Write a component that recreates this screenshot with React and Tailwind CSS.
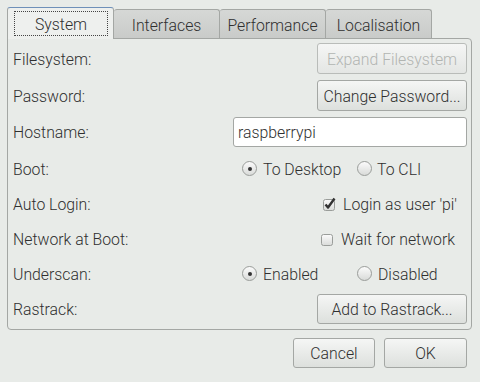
import React from 'react';

const btn =
  'flex items-center justify-center rounded-[3px] border bg-gradient-to-b from-[#f5f6f5] to-[#dde0dd] border-[#a4a7a4]';

function Radio({ checked }) {
  return (
    <span className="w-[15px] h-[15px] rounded-full border border-[#9a9d9a] bg-gradient-to-b from-[#fbfbfb] to-[#d9dbd9] flex items-center justify-center shrink-0">
      {checked && <span className="w-[4px] h-[4px] rounded-full bg-[#333]" />}
    </span>
  );
}

function Check({ checked }) {
  return (
    <svg width="14" height="14" viewBox="0 0 14 14" className="shrink-0">
      <defs>
        <linearGradient id="cb" x1="0" y1="0" x2="0" y2="1">
          <stop offset="0" stopColor="#fbfbfb" />
          <stop offset="1" stopColor="#d9dbd9" />
        </linearGradient>
      </defs>
      <rect x="1.5" y="2.5" width="11" height="11" rx="2" fill="url(#cb)" stroke="#9a9d9a" />
      {checked && (
        <path d="M3.5 7.5 L6 10.5 L12.5 1.5" fill="none" stroke="#333" strokeWidth="2.4" strokeLinejoin="round" />
      )}
    </svg>
  );
}

const Row = ({ label, children, h = 'h-[35px]', className = '' }) => (
  <div className={`flex items-center justify-between ${h} ${className}`}>
    <span className="pt-[2px]">{label}</span>
    {children}
  </div>
);

export default function App() {
  const tabs = ['Interfaces', 'Performance', 'Localisation'];
  return (
    <div className="w-[480px] h-[382px] bg-[#e8ebe8] font-['Roboto'] font-light text-[15.8px] leading-[18px] text-[#2f2f2f] pl-[7px] pr-[8px] pt-[7px] overflow-hidden">
      {/* tabs */}
      <div className="flex items-end h-[31px]">
        <div className="relative z-10 -mb-px w-[107px] h-[32px] bg-[#eef0ee] border border-b-0 border-[#a4a7a4] border-t-[#6f90b9] rounded-t-[3px] pl-[6px] pr-[5px] pt-[3px]">
          <div className="h-[25px] pt-[2px] border border-dotted border-[#444] flex items-center justify-center">System</div>
        </div>
        {tabs.map((t) => (
          <div
            key={t}
            className="w-[106px] h-[29px] pt-[3px] bg-gradient-to-b from-[#d6d8d6] to-[#c9cbc9] border border-b-0 border-l-0 border-[#a4a7a4] rounded-t-[3px] flex items-center justify-center"
          >
            {t}
          </div>
        ))}
      </div>

      {/* panel */}
      <div className="border border-[#a4a7a4] rounded-b-[4px] rounded-tr-[4px] pl-[5px] pr-[4px] pt-[4px] pb-[5px]">
        <Row label="Filesystem:" h="h-[31px]">
          <div className={`${btn} w-[150px] h-[31px] pt-[2px] text-[#b2b5b2] border-[#b9bcb9] from-[#f1f2f1] to-[#e4e6e4]`}>Expand Filesystem</div>
        </Row>
        <Row label="Password:" h="h-[31px]" className="mt-[6px]">
          <div className={`${btn} w-[150px] h-[31px] pt-[2px]`}>Change Password...</div>
        </Row>
        <Row label="Hostname:" h="h-[30px]" className="mt-[6px]">
          <div className="w-[234px] h-[30px] pt-[2px] bg-white border border-[#a4a7a4] rounded-[3px] flex items-center pl-[4px]">raspberrypi</div>
        </Row>
        <div className="mt-[4px]">
          <Row label="Boot:">
            <div className="w-[234px] grid grid-cols-[115px_1fr]">
              <div className="flex items-center gap-[6px] pl-[9px]"><Radio checked /><span className="pt-[2px]">To Desktop</span></div>
              <div className="flex items-center gap-[5px] pl-[9px]"><Radio /><span className="pt-[2px]">To CLI</span></div>
            </div>
          </Row>
          <Row label="Auto Login:">
            <div className="flex items-center gap-[7px] pr-[10px]"><Check checked /><span className="pt-[2px]">Login as user 'pi'</span></div>
          </Row>
          <Row label="Network at Boot:">
            <div className="flex items-center gap-[7px] pr-[12px]"><Check /><span className="pt-[2px]">Wait for network</span></div>
          </Row>
          <Row label="Underscan:">
            <div className="w-[234px] grid grid-cols-[115px_1fr]">
              <div className="flex items-center gap-[6px] pl-[9px]"><Radio checked /><span className="pt-[2px]">Enabled</span></div>
              <div className="flex items-center gap-[6px] pl-[9px]"><Radio /><span className="pt-[2px]">Disabled</span></div>
            </div>
          </Row>
        </div>
        <Row label="Rastrack:" h="h-[30px]" className="mt-[3px]">
          <div className={`${btn} w-[150px] h-[30px] pt-[2px]`}>Add to Rastrack...</div>
        </Row>
      </div>

      {/* dialog buttons */}
      <div className="flex justify-end gap-[9px] mt-[8px] pr-[5px]">
        <div className={`${btn} w-[82px] h-[30px] pt-[2px]`}>Cancel</div>
        <div className={`${btn} w-[83px] h-[30px] pt-[2px]`}>OK</div>
      </div>
    </div>
  );
}
